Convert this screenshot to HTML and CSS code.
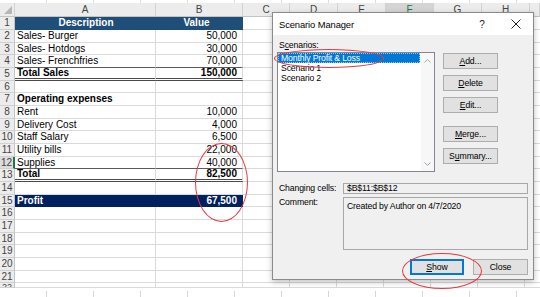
FILE: index.html
```html
<!DOCTYPE html>
<html lang="en">
<head>
    <meta charset="UTF-8">
    <title>Scenario Manager</title>
    <link rel="stylesheet" href="styles.css">
</head>
<body>
    <div class="sheet">
        <div class="strip"></div>
        <div class="colhdr">
            <span class="corner"></span>
            <span>A</span><span>B</span><span>C</span><span>D</span><span>E</span>
            <span class="sel">F</span><span>G</span><span>H</span><span></span>
        </div>
        <div class="rows">
            <div class="row hd"><span class="rh">1</span><span class="a">Description</span><span class="b">Value</span><span class="rest"></span></div>
            <div class="row"><span class="rh">2</span><span class="a">Sales- Burger</span><span class="b">50,000</span><span class="rest"></span></div>
            <div class="row"><span class="rh">3</span><span class="a">Sales- Hotdogs</span><span class="b">30,000</span><span class="rest"></span></div>
            <div class="row above"><span class="rh">4</span><span class="a">Sales- Frenchfries</span><span class="b">70,000</span><span class="rest"></span></div>
            <div class="row tot"><span class="rh">5</span><span class="a">Total Sales</span><span class="b">150,000</span><span class="rest"></span></div>
            <div class="row"><span class="rh">6</span><span class="a"></span><span class="b"></span><span class="rest"></span></div>
            <div class="row"><span class="rh">7</span><span class="a strong">Operating expenses</span><span class="b"></span><span class="rest"></span></div>
            <div class="row"><span class="rh">8</span><span class="a">Rent</span><span class="b">10,000</span><span class="rest"></span></div>
            <div class="row"><span class="rh">9</span><span class="a">Delivery Cost</span><span class="b">4,000</span><span class="rest"></span></div>
            <div class="row"><span class="rh">10</span><span class="a">Staff Salary</span><span class="b">6,500</span><span class="rest"></span></div>
            <div class="row"><span class="rh">11</span><span class="a">Utility bills</span><span class="b">22,000</span><span class="rest"></span></div>
            <div class="row above"><span class="rh active">12</span><span class="a">Supplies</span><span class="b">40,000</span><span class="rest"></span></div>
            <div class="row tot"><span class="rh">13</span><span class="a">Total</span><span class="b">82,500</span><span class="rest"></span></div>
            <div class="row"><span class="rh">14</span><span class="a"></span><span class="b"></span><span class="rest"></span></div>
            <div class="row pf"><span class="rh">15</span><span class="a">Profit</span><span class="b">67,500</span><span class="rest"></span></div>
            <div class="row"><span class="rh">16</span><span class="a"></span><span class="b"></span><span class="rest"></span></div>
            <div class="row"><span class="rh">17</span><span class="a"></span><span class="b"></span><span class="rest"></span></div>
            <div class="row"><span class="rh">18</span><span class="a"></span><span class="b"></span><span class="rest"></span></div>
            <div class="row"><span class="rh">19</span><span class="a"></span><span class="b"></span><span class="rest"></span></div>
            <div class="row"><span class="rh">20</span><span class="a"></span><span class="b"></span><span class="rest"></span></div>
            <div class="row"><span class="rh">21</span><span class="a"></span><span class="b"></span><span class="rest"></span></div>
            <div class="row cut"><span class="rh">22</span><span class="a"></span><span class="b"></span><span class="rest"></span></div>
        </div>
        <div class="strip bottom"></div>
    </div>

    <div class="dlg">
        <div class="title">
            <span>Scenario Manager</span>
            <span class="help">?</span>
            <svg class="x" width="10" height="10" viewBox="0 0 10 10"><path d="M0.5 0.5 L9.5 9.5 M9.5 0.5 L0.5 9.5" stroke="#222" stroke-width="1" fill="none"/></svg>
        </div>
        <div class="body">
            <div class="scen">
                <div class="lbl">S<u>c</u>enarios:</div>
                <div></div>
                <div class="list">
                    <div class="items">
                        <div class="item on">Monthly Profit &amp; Loss</div>
                        <div class="item">Scenario 1</div>
                        <div class="item">Scenario 2</div>
                    </div>
                    <div class="scroll">
                        <svg width="7" height="4" viewBox="0 0 7 4"><path d="M0.5 3.5 L3.5 0.5 L6.5 3.5" stroke="#a6a6a6" fill="none"/></svg>
                        <svg width="7" height="4" viewBox="0 0 7 4"><path d="M0.5 0.5 L3.5 3.5 L6.5 0.5" stroke="#a6a6a6" fill="none"/></svg>
                    </div>
                </div>
                <div class="btns">
                    <button><u>A</u>dd...</button>
                    <button><u>D</u>elete</button>
                    <button><u>E</u>dit...</button>
                    <button class="gap"><u>M</u>erge...</button>
                    <button>S<u>u</u>mmary...</button>
                </div>
            </div>
            <div class="info">
                <div class="lbl2">Changing cells:</div>
                <div class="field">$B$11:$B$12</div>
                <div class="lbl2">Comment:</div>
                <div class="field big">Created by Author on 4/7/2020</div>
            </div>
            <div class="foot">
                <button class="def"><u>S</u>how</button>
                <button>Close</button>
            </div>
        </div>
    </div>

    <div class="ring r1"></div>
    <div class="ring r2"></div>
    <div class="ring r3"></div>
</body>
</html>
```

FILE: styles.css
```css
body {
    margin: 0;
    width: 540px;
    height: 297px;
    overflow: hidden;
    position: relative;
    background: #fff;
    font-family: 'Liberation Sans', Arial, sans-serif;
}

/* spreadsheet */
.strip {
    height: 3px;
    background: repeating-linear-gradient(to right, transparent 0 46px, #dedede 46px 47px);
}

.strip.bottom {
    height: 9px;
    background:
        linear-gradient(#fff 0 3px, transparent 3px),
        repeating-linear-gradient(to right, transparent 0 46px, #d6d6d6 46px 47px);
}

.colhdr {
    display: grid;
    grid-template-columns: 15px 141px 87px 47px 48px 48px 48px 48px 48px 1fr;
    height: 14px;
    background: #ececec;
    border-bottom: 1px solid #c4c4c4;
    box-sizing: border-box;
}

.colhdr span {
    border-right: 1px solid #d2d2d2;
    font-size: 10px;
    line-height: 13px;
    text-align: center;
    color: #444;
}

.colhdr .sel {
    background: #d4d4d4;
    color: #217346;
}

.corner {
    position: relative;
}

.corner::after {
    content: '';
    position: absolute;
    right: 2px;
    bottom: 2px;
    border-left: 8px solid transparent;
    border-bottom: 8px solid #b6b6b6;
}

.row {
    display: grid;
    grid-template-columns: 15px 141px 87px 1fr;
    height: 13px;
}

.row:nth-child(3n) {
    height: 12px;
}

.row > span {
    box-sizing: border-box;
    border-right: 1px solid #dadada;
    border-bottom: 1px solid #dadada;
    font-size: 10px;
    line-height: 12px;
    white-space: nowrap;
    overflow: hidden;
    color: #000;
}

.row > .rh {
    background: #ececec;
    border-right-color: #c4c4c4;
    border-bottom-color: #d0d0d0;
    text-align: center;
    color: #444;
}

.row > .rh.active {
    border-right: 2px solid #217346;
    background: #dcdcdc;
}

.row > .a {
    padding-left: 2px;
}

.row > .b {
    text-align: right;
    padding-right: 5px;
}

.row > .rest {
    border-right: none;
    background: repeating-linear-gradient(to right, transparent 0 46px, #dadada 46px 47px);
}

.strong {
    font-weight: bold;
}

.hd > .a,
.hd > .b {
    background: #1f4e78;
    border-color: #1f4e78;
    color: #fff;
    font-weight: bold;
    text-align: center;
}

.above > .a,
.above > .b {
    border-bottom-color: #5a5a5a;
}

.tot > .a,
.tot > .b {
    font-weight: bold;
    border-bottom: 3px double #4a4a4a;
    line-height: 10px;
}

.pf > .a,
.pf > .b {
    background: #002060;
    border-color: #002060;
    color: #fff;
    font-weight: bold;
}

.row.cut {
    height: 5px;
}

.row.cut > .rh {
    line-height: 9px;
    font-size: 9px;
}

/* dialog */
.dlg {
    position: absolute;
    left: 272px;
    top: 12px;
    width: 262px;
    height: 268px;
    box-sizing: border-box;
    border: 1px solid #8a8a8a;
    background: #f0f0f0;
    box-shadow: 0 2px 6px rgba(0, 0, 0, 0.25);
    font-size: 8.7px;
    letter-spacing: -0.15px;
    color: #000;
}

.title {
    height: 22px;
    background: #fff;
    display: flex;
    align-items: center;
    padding: 0 12px 0 6px;
    font-size: 9.4px;
    letter-spacing: -0.1px;
}

.help {
    margin-left: auto;
    width: 10px;
    text-align: center;
    font-size: 10px;
    color: #222;
}

.x {
    margin-left: 24px;
}

.body {
    padding: 5px 5px 0 4px;
}

.scen {
    display: grid;
    grid-template-columns: 158px 55px;
    column-gap: 8px;
}

.lbl {
    padding-left: 2px;
    line-height: 10px;
    margin-bottom: 2px;
}

.list {
    height: 120px;
    box-sizing: border-box;
    border: 1px solid #828790;
    background: #fff;
    display: grid;
    grid-template-columns: 1fr 13px;
}

.items {
    padding: 0 1px 0 0;
}

.item {
    line-height: 10px;
    padding-left: 3px;
    white-space: nowrap;
}

.item.on {
    background: #0078d7;
    color: #fff;
    outline: 1px dotted #9cc3e8;
    outline-offset: -1px;
}

.scroll {
    background: #f7f7f7;
    display: flex;
    flex-direction: column;
    justify-content: space-between;
    align-items: center;
    padding: 6px 0 5px;
}

.btns {
    display: flex;
    flex-direction: column;
    gap: 6px;
    padding-top: 1px;
}

button {
    height: 16px;
    padding: 0;
    background: #e1e1e1;
    border: 1px solid #adadad;
    font-family: 'Liberation Sans', Arial, sans-serif;
    font-size: 8.7px;
    letter-spacing: -0.1px;
    color: #000;
}

.btns .gap {
    margin-top: 7px;
}

.info {
    display: grid;
    grid-template-columns: 66px 185px;
    row-gap: 3px;
    margin-top: 11px;
}

.lbl2 {
    padding-left: 2px;
    line-height: 10px;
    white-space: nowrap;
}

.info .lbl2:first-child {
    line-height: 11px;
}

.field {
    height: 11px;
    box-sizing: border-box;
    border: 1px solid #a8a8a8;
    padding-left: 3px;
    line-height: 9px;
}

.field.big {
    height: 53px;
    padding-top: 3px;
    line-height: 10px;
}

.foot {
    display: flex;
    justify-content: flex-end;
    gap: 9px;
    margin-top: 9px;
}

.foot button {
    width: 55px;
}

.foot .def {
    width: 54px;
    border-color: #0078d7;
    box-shadow: inset 0 0 0 1px #0078d7;
}

/* red marks */
.ring {
    position: absolute;
    border: 1px solid #e6393f;
    border-radius: 50%;
}

.r1 { left: 274px; top: 49px; width: 108px; height: 17px; }
.r2 { left: 402px; top: 253px; width: 78px; height: 34px; }
.r3 { left: 195px; top: 143px; width: 51px; height: 77px; }
```
